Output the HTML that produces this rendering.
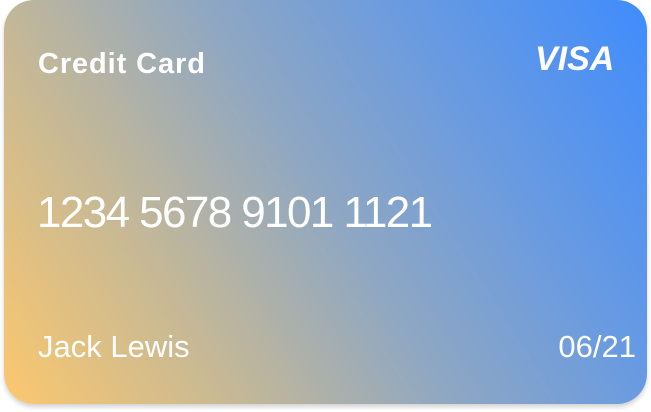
<!DOCTYPE html>
<html><head><style>
html,body{margin:0;padding:0;background:#fff;width:651px;height:412px;overflow:hidden}
.card{position:absolute;left:4px;top:0;width:643px;height:404px;border-radius:30px;
background:linear-gradient(58deg,#fcc86e 0%,#c8b994 25%,#8fa7c2 50%,#6a9be0 72%,#3f8cfd 100%);
box-shadow:0 3px 5px rgba(0,0,0,0.18);font-family:"Liberation Sans",sans-serif;color:#fff}
.t{position:absolute;white-space:nowrap}
</style></head><body>
<div class="card">
<div class="t" style="left:34px;top:48px;font-size:29px;font-weight:bold;letter-spacing:0.9px">Credit Card</div>
<div class="t" style="left:531px;top:40px;font-size:34px;font-weight:bold;font-style:italic;letter-spacing:0px">VISA</div>
<div class="t" style="left:33px;top:188px;font-size:44px;font-weight:300;letter-spacing:-1.6px">1234 5678 9101 1121</div>
<div class="t" style="left:34px;top:329px;font-size:31px">Jack Lewis</div>
<div class="t" style="right:11px;top:329px;font-size:31px">06/21</div>
</div>
</body></html>
